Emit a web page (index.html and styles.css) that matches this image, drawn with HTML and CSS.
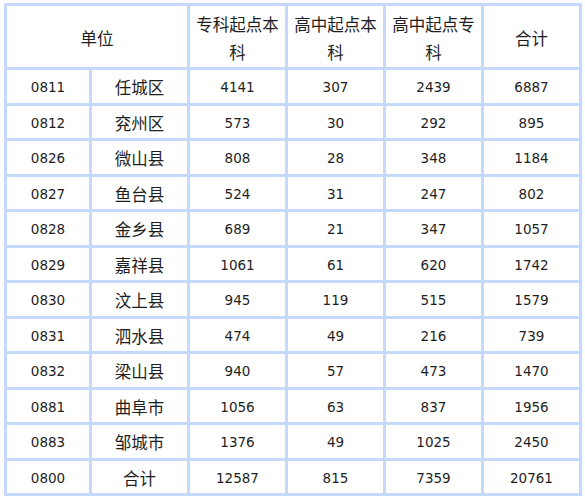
FILE: index.html
```html
<!DOCTYPE html>
<html lang="zh">
<head>
<meta charset="utf-8">
<link rel="stylesheet" href="styles.css">
</head>
<body>
<table class="stats">
  <colgroup>
    <col class="c-code">
    <col class="c-name">
    <col class="c-num">
    <col class="c-num">
    <col class="c-num">
    <col class="c-num">
  </colgroup>
  <thead>
    <tr class="head">
      <th colspan="2" class="zh">单位</th>
      <th class="zh">专科起点本<br>科</th>
      <th class="zh">高中起点本<br>科</th>
      <th class="zh">高中起点专<br>科</th>
      <th class="zh">合计</th>
    </tr>
  </thead>
  <tbody>
    <tr><td>0811</td><td class="zh">任城区</td><td>4141</td><td>307</td><td>2439</td><td>6887</td></tr>
    <tr><td>0812</td><td class="zh">兖州区</td><td>573</td><td>30</td><td>292</td><td>895</td></tr>
    <tr><td>0826</td><td class="zh">微山县</td><td>808</td><td>28</td><td>348</td><td>1184</td></tr>
    <tr><td>0827</td><td class="zh">鱼台县</td><td>524</td><td>31</td><td>247</td><td>802</td></tr>
    <tr><td>0828</td><td class="zh">金乡县</td><td>689</td><td>21</td><td>347</td><td>1057</td></tr>
    <tr><td>0829</td><td class="zh">嘉祥县</td><td>1061</td><td>61</td><td>620</td><td>1742</td></tr>
    <tr><td>0830</td><td class="zh">汶上县</td><td>945</td><td>119</td><td>515</td><td>1579</td></tr>
    <tr><td>0831</td><td class="zh">泗水县</td><td>474</td><td>49</td><td>216</td><td>739</td></tr>
    <tr><td>0832</td><td class="zh">梁山县</td><td>940</td><td>57</td><td>473</td><td>1470</td></tr>
    <tr><td>0881</td><td class="zh">曲阜市</td><td>1056</td><td>63</td><td>837</td><td>1956</td></tr>
    <tr><td>0883</td><td class="zh">邹城市</td><td>1376</td><td>49</td><td>1025</td><td>2450</td></tr>
    <tr><td>0800</td><td class="zh">合计</td><td>12587</td><td>815</td><td>7359</td><td>20761</td></tr>
  </tbody>
</table>
</body>
</html>
```

FILE: styles.css
```css
html, body {
  background: #ffffff;
}
body {
  margin: 0;
  padding: 3px 0 0 4px;
}
.stats {
  border-collapse: collapse;
  table-layout: fixed;
  width: 578px;
  border: 3px solid #c5d9fd;
  color: #1e1e1e;
  font-family: "DejaVu Sans", Verdana, sans-serif;
  font-size: 13.5px;
}
.c-code { width: 85px; }
.c-name { width: 98px; }
.c-num { width: 98px; }
.stats th,
.stats td {
  border: 3px solid #c5d9fd;
  text-align: center;
  vertical-align: middle;
  padding: 2px 0 0;
  font-weight: normal;
}
.stats .head th {
  height: 59px;
  line-height: 28px;
}
.stats tbody tr {
  height: 35.5px;
}
.zh {
  font-family: "Noto Sans CJK SC", "Noto Sans", sans-serif;
  font-size: 16.5px;
}
```
